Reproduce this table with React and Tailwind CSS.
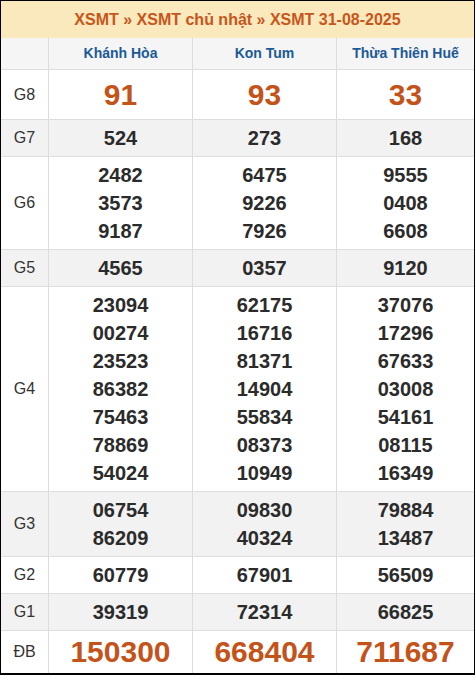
const provinces = ["Khánh Hòa", "Kon Tum", "Thừa Thiên Huế"];

const rows = [
  { label: "G8", big: true, values: [["91"], ["93"], ["33"]] },
  { label: "G7", values: [["524"], ["273"], ["168"]] },
  {
    label: "G6",
    values: [
      ["2482", "3573", "9187"],
      ["6475", "9226", "7926"],
      ["9555", "0408", "6608"],
    ],
  },
  { label: "G5", values: [["4565"], ["0357"], ["9120"]] },
  {
    label: "G4",
    values: [
      ["23094", "00274", "23523", "86382", "75463", "78869", "54024"],
      ["62175", "16716", "81371", "14904", "55834", "08373", "10949"],
      ["37076", "17296", "67633", "03008", "54161", "08115", "16349"],
    ],
  },
  {
    label: "G3",
    values: [
      ["06754", "86209"],
      ["09830", "40324"],
      ["79884", "13487"],
    ],
  },
  { label: "G2", values: [["60779"], ["67901"], ["56509"]] },
  { label: "G1", values: [["39319"], ["72314"], ["66825"]] },
  { label: "ĐB", special: true, values: [["150300"], ["668404"], ["711687"]] },
];

const widths = ["w-[144px]", "w-[144px]", "flex-1"];

export default function App() {
  return (
    <div className="w-[475px] h-[675px] bg-white font-['Liberation_Sans',Arial,sans-serif]">
      <div className="border border-black border-b-2">
        {/* tiêu đề */}
        <div className="h-[37px] bg-[#f9e9bd] flex items-center justify-center text-[16px] font-bold text-[#c8561b]">
          XSMT » XSMT chủ nhật » XSMT 31-08-2025
        </div>

        {/* tỉnh */}
        <div className="flex h-[32px] bg-[#f5f5f5] border-b border-[#dddddd]">
          <div className="w-[47px]" />
          {provinces.map((p, i) => (
            <div
              key={p}
              className={`${widths[i]} border-l border-[#dddddd] flex items-center justify-center text-[14px] font-bold text-[#1b5a96]`}
            >
              {p}
            </div>
          ))}
        </div>

        {rows.map((row, r) => {
          const isLast = r === rows.length - 1;
          const bg = r % 2 === 1 ? "bg-[#f2f2f2]" : "bg-white";
          let numCls = "text-[20px] leading-[28px] text-[#2b2b2b]";
          if (row.big) numCls = "text-[30px] leading-[41px] text-[#c4531a]";
          if (row.special) numCls = "text-[30px] leading-[34px] text-[#c4531a]";
          return (
            <div
              key={row.label}
              className={`flex ${bg} ${isLast ? "" : "border-b border-[#dddddd]"}`}
            >
              <div className="w-[47px] flex items-center justify-center text-[16px] text-[#333333]">
                {row.label}
              </div>
              {row.values.map((vals, i) => (
                <div
                  key={i}
                  className={`${widths[i]} border-l border-[#dddddd] py-1 flex flex-col items-center justify-center font-bold ${numCls}`}
                >
                  {vals.map((v) => (
                    <div key={v}>{v}</div>
                  ))}
                </div>
              ))}
            </div>
          );
        })}
      </div>
    </div>
  );
}
